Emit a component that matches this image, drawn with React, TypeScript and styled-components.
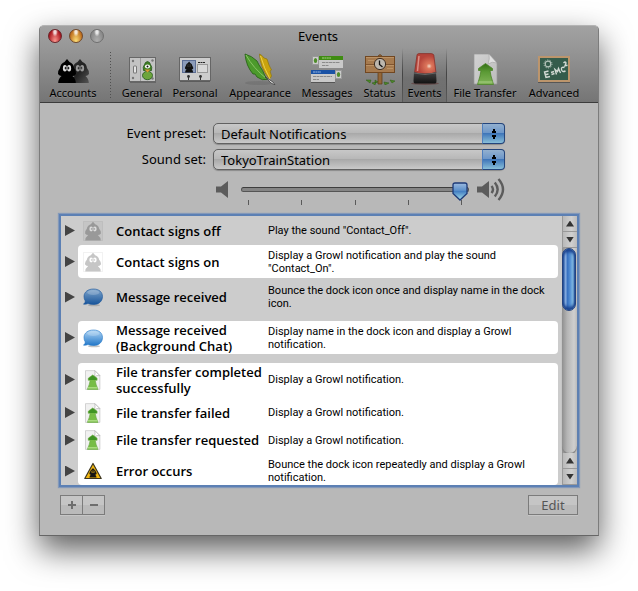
import React, { useState } from "react";
import styled, { createGlobalStyle, css } from "styled-components";

const GlobalStyle = createGlobalStyle`
  * { box-sizing: border-box; }
  body {
    margin: 0;
    background: #fff;
    color: #000;
    font-family: "Noto Sans", "Open Sans", sans-serif;
    font-size: 13px;
    overflow: hidden;
  }
  button, select { font: inherit; color: inherit; }
`;

const Window = styled.main`
  margin: 25px 39px 54px;
  border: 1px solid #7c7c7c;
  border-top-color: #b4b4b4;
  border-bottom-color: #666;
  border-radius: 5px 5px 0 0;
  background: #b8b8b8;
  box-shadow: 0 14px 32px rgba(0, 0, 0, 0.64);
`;

const Header = styled.header`
  border-bottom: 1px solid #3c3c3c;
  border-radius: 4px 4px 0 0;
  background: linear-gradient(#a2a2a2, #949494 35%, #757575);
`;

const TitleBar = styled.div`
  display: grid;
  grid-template-columns: 1fr auto 1fr;
  align-items: center;
  height: 20px;
  padding: 0 10px 0 8px;
`;

const Lights = styled.div`
  display: flex;
  gap: 7px;
`;

const Light = styled.button<{ $base: string; $glow: string; $edge: string }>`
  width: 14px;
  height: 14px;
  padding: 0;
  border: 1px solid ${(p) => p.$edge};
  border-radius: 50%;
  background:
    radial-gradient(ellipse at 50% 15%, rgba(255, 255, 255, 0.8) 0 12%, transparent 34%),
    radial-gradient(ellipse at 50% 95%, ${(p) => p.$glow}, ${(p) => p.$base} 80%);
`;

const Title = styled.h1`
  margin: 0;
  font-size: 13px;
  font-weight: 400;
`;

const Toolbar = styled.nav`
  display: flex;
  height: 56px;
  padding-left: 3px;
`;

const Tool = styled.button<{ $width: number; $selected?: boolean }>`
  display: flex;
  flex: none;
  flex-direction: column;
  align-items: center;
  width: ${(p) => p.$width}px;
  padding: 7px 0 0;
  border: 0;
  background: none;
  font-size: 11px;
  line-height: 16px;
  white-space: nowrap;
  text-shadow: 0 1px 0 rgba(255, 255, 255, 0.15);
  ${(p) =>
    p.$selected &&
    css`
      border: solid transparent;
      border-width: 0 1px;
      border-image: linear-gradient(transparent 5%, #444 50%, #5c5c5c) 1;
      background: linear-gradient(transparent 5%, rgba(0, 0, 0, 0.14) 60%, rgba(0, 0, 0, 0.06));
    `}
`;

const ToolIcon = styled.svg`
  flex: none;
  width: 34px;
  height: 32px;
`;

const Divider = styled.span`
  width: 14px;
  flex: none;
  margin: 6px 0 4px;
  background: linear-gradient(#505050 1px, transparent 1px) center top / 1px 3px repeat-y;
`;

const Content = styled.div`
  padding: 20px 18px 20px 19px;
`;

const Settings = styled.div`
  display: grid;
  grid-template-columns: 147px 1fr;
  column-gap: 7px;
  row-gap: 5px;
  align-items: center;
  margin-right: 75px;
`;

const Label = styled.label`
  text-align: right;
  line-height: 21px;
`;

const Popup = styled.div`
  position: relative;
  height: 21px;
  &::after {
    content: "";
    position: absolute;
    inset: 0 0 0 auto;
    width: 21px;
    border: 1px solid #24457c;
    border-left-color: #4f7fbe;
    border-radius: 0 4px 4px 0;
    background:
      conic-gradient(from 153deg at 50% 0, #000 54deg, transparent 0) center 4px / 6px 5px no-repeat,
      conic-gradient(from -27deg at 50% 100%, #000 54deg, transparent 0) center 11px / 6px 5px no-repeat,
      linear-gradient(#93b0cf, #6d97c9 45%, #3f76b9 50%, #88bfd9);
    pointer-events: none;
  }
`;

const Select = styled.select`
  width: 100%;
  height: 21px;
  padding: 0 26px 0 7px;
  appearance: none;
  border: 1px solid #616161;
  border-radius: 5px;
  background: linear-gradient(#c8c8c8, #b8b8b8 45%, #a9a9a9 50%, #c9c9c9);
  box-shadow: 0 1px 1px rgba(0, 0, 0, 0.25);
  outline: 0;
`;

const Volume = styled.div`
  display: grid;
  grid-template-columns: 20px 1fr 30px;
  column-gap: 6px;
  grid-column: 2;
  align-items: start;
  height: 37px;
  margin-left: 2px;
  padding-top: 2px;
`;

const Range = styled.input`
  display: block;
  width: 100%;
  height: 20px;
  margin: 2px 0 0;
  appearance: none;
  background: none;
  &::-webkit-slider-runnable-track {
    height: 5px;
    border: 1px solid #555;
    border-top-color: #3e3e3e;
    border-radius: 3px;
    background: #858585;
  }
  &::-webkit-slider-thumb {
    appearance: none;
    width: 16px;
    height: 19px;
    margin-top: -6px;
    background: url("data:image/svg+xml,%3Csvg xmlns='http://www.w3.org/2000/svg' viewBox='0 0 16 19'%3E%3Cdefs%3E%3ClinearGradient id='g' x2='0' y2='1'%3E%3Cstop stop-color='%239dbbe0'/%3E%3Cstop offset='.42' stop-color='%235f92cb'/%3E%3Cstop offset='.5' stop-color='%234580c3'/%3E%3Cstop offset='1' stop-color='%23a5e0ea'/%3E%3C/linearGradient%3E%3C/defs%3E%3Cpath d='M3 1h10q2 0 2 2v8.500l-7 6.500l-7-6.500V3q0-2 2-2z' fill='url(%23g)' stroke='%231d3a78' stroke-width='1.300'/%3E%3C/svg%3E");
  }
`;

const Ticks = styled.div`
  display: flex;
  justify-content: space-between;
  margin: 1px 7px 0;
`;

const Tick = styled.i`
  width: 1px;
  height: 5px;
  background: #5a5a5a;
`;

const Speaker = styled.svg`
  width: 100%;
  height: 26px;
`;

const ListFrame = styled.div`
  display: grid;
  grid-template-columns: 1fr 15px;
  margin: 4px 3px 0 2px;
  background: #ccc;
  box-shadow: 0 0 0 2px #5c80b4, 0 0 1px 3px #8398b9;
`;

const Events = styled.table`
  display: block;
  font-size: 11px;
  line-height: 13px;
`;

const Group = styled.tbody<{ $light?: boolean; $after?: number }>`
  display: block;
  margin: 0 4px ${(p) => p.$after ?? 0}px 0;
  ${(p) =>
    p.$light &&
    css`
      td:not(:first-child) { background: #fff; }
      tr:first-child td:nth-child(2) { border-top-left-radius: 4px; }
      tr:last-child td:nth-child(2) { border-bottom-left-radius: 4px; }
      tr:first-child td:last-child { border-top-right-radius: 4px; }
      tr:last-child td:last-child { border-bottom-right-radius: 4px; }
    `}
`;

const EventRow = styled.tr<{ $height: number; $pad?: number }>`
  display: grid;
  grid-template-columns: 17px 36px 152px 1fr;
  min-height: ${(p) => p.$height}px;
  & > td { padding-top: ${(p) => p.$pad ?? 0}px; }
`;

const Cell = styled.td`
  display: flex;
  align-items: center;
  padding: 0;
`;

const IconCell = styled(Cell)`
  svg { width: 20px; height: 20px; margin-left: 5px; }
`;

const NameCell = styled(Cell)`
  padding-left: 2px;
  font-family: "Open Sans", "Noto Sans", sans-serif;
  font-size: 13px;
  font-weight: 600;
  line-height: 16px;
`;

const TextCell = styled(Cell)`
  padding: 0 6px 0 2px;
  font-family: Roboto, "Noto Sans", sans-serif;
`;

const Disclosure = styled.button`
  width: 10px;
  height: 11px;
  margin-left: 4px;
  padding: 0;
  border: 0;
  background: #444;
  clip-path: polygon(0 0, 100% 50%, 0 100%);
`;

const Scrollbar = styled.div`
  display: flex;
  flex-direction: column;
  background: linear-gradient(90deg, #8f8f8f, #b5b5b5 35%, #cfcfcf 80%, #bbb);
`;

const ScrollButton = styled.button<{ $down?: boolean }>`
  height: 16px;
  padding: 0;
  border: 0;
  border-left: 1px solid #999;
  border-bottom: 1px solid #999;
  background: linear-gradient(90deg, #b9b9b9, #d0d0d0 60%, #bcbcbc);
  &::before {
    content: "";
    display: block;
    width: 8px;
    height: 6px;
    margin: 0 auto;
    background: #333;
    clip-path: ${(p) => (p.$down ? "polygon(0 0, 100% 0, 50% 100%)" : "polygon(50% 0, 100% 100%, 0 100%)")};
  }
`;

const Thumb = styled.div`
  flex: none;
  height: 63px;
  margin: 0 1px 0 0;
  border: 1px solid #24437f;
  border-radius: 7px;
  background: linear-gradient(90deg, #3565ae, #8fb5e4 20%, #3771c2 38%, #5c98d8 65%, #8cc4e6 85%, #2c5a9f);
  box-shadow: inset 0 3px 3px #1b438f, inset 0 -3px 3px #1b438f;
`;

const Spacer = styled.div`
  flex: 1;
  border-radius: 0 0 8px 8px;
  box-shadow: 0 2px 1px #888;
`;

const Footer = styled.footer`
  display: flex;
  align-items: flex-end;
  justify-content: space-between;
  margin: 10px 2px 0 1px;
`;

const Segments = styled.div`
  display: flex;
`;

const SmallButton = styled.button<{ $width: number }>`
  display: flex;
  align-items: center;
  justify-content: center;
  width: ${(p) => p.$width}px;
  height: 20px;
  padding: 0;
  border: 1px solid #7b7b7b;
  background: linear-gradient(#c5c5c5 50%, #bababa 50%);
  color: #555;
  box-shadow: 0 1px 0 #c6c6c6;
  & + & { margin-left: -1px; }
  svg { width: 10px; height: 10px; }
`;

/* A hooded two-eyed figure, drawn in a 20 × 24 area. */
const Figure = ({ fill, eye = "#fff" }: { fill: string; eye?: string }) => (
  <g>
    <path
      d="M10 0 12.500 3Q16.500 4.500 17 9Q19.500 12 19 15Q17.500 17 15.500 17Q18.800 20 18.800 24H1.200Q1.200 20 4.500 17Q2.500 17 1 15Q.5 12 3 9Q3.500 4.500 7.500 3Z"
      fill={fill}
    />
    <ellipse cx="7.900" cy="9.200" rx="2" ry="3.200" fill={eye} />
    <ellipse cx="12.100" cy="9.200" rx="2" ry="3.200" fill={eye} />
    <path d="M8.700 7.800v2.600M11.300 7.800v2.600M7.600 9.100h2M10.400 9.100h2" stroke={fill} strokeWidth=".9" />
  </g>
);

const AccountsIcon = () => (
  <ToolIcon viewBox="0 0 34 32">
    <defs>
      <linearGradient id="shade" x1="0" y1="0" x2="1" y2="1">
        <stop stopColor="#333" />
        <stop offset=".5" stopColor="#222" />
        <stop offset="1" stopColor="#555" />
      </linearGradient>
    </defs>
    <g transform="translate(14 6)"><Figure fill="url(#shade)" eye="#999" /></g>
    <g transform="translate(1 6)"><Figure fill="#000" eye="#ddd" /></g>
  </ToolIcon>
);

const GeneralIcon = () => (
  <ToolIcon viewBox="0 0 34 32">
    <rect x="4.500" y="4.500" width="26" height="24" fill="#c3c3c3" stroke="#676767" />
    <path d="M5 29.500H31" stroke="#555" opacity=".6" />
    <path d="M15.500 5V28" stroke="#999" />
    <g fill="#777"><circle cx="8" cy="8" r="1.200" /><circle cx="8" cy="25" r="1.200" /><circle cx="27.500" cy="7.500" r="1.200" /><circle cx="27.500" cy="25.500" r="1.200" /></g>
    <rect x="8" y="12.500" width="4" height="8" rx="1.500" fill="#777" />
    <rect x="9" y="13.500" width="2" height="6" fill="#e4e4e4" />
    <path d="M22.500 8.500Q25 9 25.500 11.500Q27.500 14 26.500 17.500H18.500Q17.500 14 19.500 11.500Q20 9 22.500 8.500Z" fill="#3f7d22" stroke="#23551a" strokeWidth=".8" />
    <ellipse cx="22.500" cy="22.500" rx="5" ry="4.200" fill="#6da53c" stroke="#23551a" strokeWidth=".8" />
    <ellipse cx="22.500" cy="13.500" rx="2.600" ry="2" fill="#fff" />
    <circle cx="22.500" cy="13.500" r="1" fill="#111" />
    <path d="M19.500 16.500H25.500L22.500 19.500Z" fill="#d79a31" />
  </ToolIcon>
);

const PersonalIcon = () => (
  <ToolIcon viewBox="0 0 34 32">
    <rect x="1.500" y="4.500" width="31" height="23" fill="#cdcdcd" stroke="#666" />
    <path d="M2 28.500H32" stroke="#444" opacity=".6" />
    <rect x="4.500" y="7.500" width="13" height="12" fill="#8c9cba" stroke="#5c6e95" />
    <g transform="translate(6.500 8.500) scale(.46)"><Figure fill="#111" eye="#333" /></g>
    <path d="M20 9.500H27" stroke="#222" strokeDasharray="2 .5" />
    <rect x="19.500" y="11.500" width="10" height="8" fill="#d8d8d8" stroke="#999" />
    <g fill="#333"><circle cx="10.500" cy="23.500" r="1.400" /><circle cx="22.500" cy="23.500" r="1.400" /><path d="M10 24h1v3h-1zM22 24h1v3h-1z" /></g>
  </ToolIcon>
);

const AppearanceIcon = () => (
  <ToolIcon viewBox="0 0 34 32">
    <ellipse cx="16" cy="30" rx="14" ry="2" fill="#555" opacity=".25" />
    <path d="M16.500 1Q19 2 21 5L24 6 26 12 28.500 17 27 18 28.500 23Q27 27 25.500 25Q17 14 16.500 1Z" fill="#c9a30e" stroke="#8d750e" strokeWidth=".7" />
    <path d="M17.500 3Q21 15 27 26" stroke="#ecd04e" fill="none" />
    <path d="M2 1Q9 3 14 8L16 12Q20 17 22 23L25 26.500Q19 28 14 24L12 21 10 21Q3 13 2 1Z" fill="#4c9a2c" stroke="#236111" strokeWidth=".8" />
    <path d="M3 2Q10 15 24 26" stroke="#8ac466" fill="none" />
    <path d="M22 24 30 29 32 32 28 30Z" fill="#ddd" stroke="#333" strokeWidth=".7" />
  </ToolIcon>
);

const MessagesIcon = () => (
  <ToolIcon viewBox="0 0 34 32">
    <rect x="9" y="4" width="24" height="11" fill="#c9c9c9" />
    <rect x="9" y="3" width="24" height="4" fill="#3f8c12" />
    <path d="M12 5H21" stroke="#a6d185" strokeDasharray="2 .4" />
    <path d="M12 9.500H30M12 12.500H19" stroke="#8a8a8a" strokeDasharray="3 .5" />
    <rect x="2.500" y="3.500" width="6" height="8" fill="#ccc" stroke="#999" />
    <ellipse cx="5.500" cy="7.500" rx="1.700" ry="2.500" fill="#4f8c2a" />
    <rect x="1" y="18" width="24" height="11" fill="#c9c9c9" />
    <rect x="1" y="17" width="24" height="4" fill="#1a52a5" />
    <path d="M3 19H11" stroke="#9bbae4" strokeDasharray="2 .4" />
    <path d="M3 23.500H22M3 26.500H9" stroke="#8a8a8a" strokeDasharray="3 .5" />
    <path d="M1 29.500H25" stroke="#555" />
    <rect x="25.500" y="17.500" width="6" height="8" fill="#ccc" stroke="#999" />
    <ellipse cx="28.500" cy="21.500" rx="1.700" ry="2.500" fill="#4f8c2a" />
  </ToolIcon>
);

const StatusIcon = () => (
  <ToolIcon viewBox="0 0 34 32">
    <path d="M3 27l5 0-1 3zM9 30l4-1-1 3zM21 29l5 1-4 2zM27 27l5 1-3 2zM12 27l3 2-3 1z" fill="#4c8726" stroke="#2c5d17" strokeWidth=".5" />
    <path d="M15 3Q17 0 19 3V31H15Z" fill="#946738" stroke="#593716" strokeWidth=".7" />
    <rect x="2.500" y="3.500" width="29" height="16" fill="#a67a4e" stroke="#714721" />
    <path d="M3 11.500H31" stroke="#805530" />
    <path d="M3 4.500H31M3 12.500H31M5 7.500h6M24 15.500h6" stroke="#bb9265" />
    <circle cx="17" cy="11" r="5.600" fill="#bdb7ae" stroke="#403025" />
    <path d="M16.500 7.500V11.500L19.500 14" stroke="#111" strokeWidth="1.300" fill="none" />
  </ToolIcon>
);

const SirenIcon = () => (
  <ToolIcon viewBox="0 0 34 32">
    <defs>
      <radialGradient id="lamp" cx=".68" cy=".6">
        <stop stopColor="#f3d9c6" />
        <stop offset=".25" stopColor="#dc765b" />
        <stop offset="1" stopColor="#b5443a" />
      </radialGradient>
      <linearGradient id="base" x1="0" y1="0" x2="0" y2="1">
        <stop stopColor="#444" />
        <stop offset="1" stopColor="#111" />
      </linearGradient>
    </defs>
    <ellipse cx="17" cy="30.500" rx="14" ry="1.500" fill="#5c2623" opacity=".45" />
    <path d="M9 2Q9 .8 11 .6H23Q25.500.8 25.800 2L28 20Q17 23 6.500 20Z" fill="url(#lamp)" stroke="#832a24" strokeWidth=".7" />
    <path d="M11 3 9.500 18" stroke="#da8f85" strokeWidth="1.500" />
    <path d="M6 19Q17 22 28 19L28.500 28Q28.500 30.500 27 30.500H7Q5.500 30.500 5.500 28Z" fill="url(#base)" />
    <path d="M6 20Q17 23 28 20" stroke="#666" fill="none" />
  </ToolIcon>
);

const TransferIcon = () => (
  <ToolIcon viewBox="0 0 34 32">
    <defs>
      <linearGradient id="paper" x1="0" y1="0" x2="1" y2="1">
        <stop stopColor="#d2d2d2" />
        <stop offset="1" stopColor="#bcbcbc" />
      </linearGradient>
      <linearGradient id="leaf" x1="0" y1="0" x2="0" y2="1">
        <stop stopColor="#336f14" />
        <stop offset=".4" stopColor="#5b9a35" />
        <stop offset="1" stopColor="#82b559" />
      </linearGradient>
    </defs>
    <path d="M6 1H21L29 10V31H6Z" fill="url(#paper)" stroke="#999" strokeWidth=".7" />
    <path d="M21 1 29 10Q24 8 20 11Q22 6 21 1Z" fill="#e0e0e0" stroke="#999" strokeWidth=".5" />
    <path d="M17.500 10.500 24.500 15.500V17.500H22L23 23 25.500 31.500H9.500L12 23 13 17.500H10.500V15.500Z" fill="url(#leaf)" stroke="#4d8428" strokeWidth=".8" />
    <path d="M10.500 29H24.500" stroke="#a9ce85" />
  </ToolIcon>
);

const AdvancedIcon = () => (
  <ToolIcon viewBox="0 0 34 32">
    <rect x="2" y="4" width="30" height="24" fill="#345c4b" stroke="#bc956c" strokeWidth="2" />
    <path d="M1 29.500H33" stroke="#444" opacity=".7" />
    <circle cx="11" cy="11" r="2.800" stroke="#b4c4ba" strokeWidth="1.200" fill="none" />
    <circle cx="11" cy="11" r="4" stroke="#b4c4ba" strokeDasharray="1.200 1.300" fill="none" />
    <path d="M11.500 18 7.500 19 9 24.500 13 23.500M8 21.800 11.500 21M14 19.500l3-1M14.500 21.500l3-1M19.500 21.500 18 16.500 20.500 18.500 21.500 15.500 23.500 20M27.500 14.500q-3.500-1-3 2t4 1.500M26.500 10q2-2 2.500 0l-1 2.800 2.500-.6" stroke="#d3dbd5" strokeWidth="1.400" fill="none" />
  </ToolIcon>
);

const ContactArt = ({ fill, page, eye }: { fill: string; page: string; eye: string }) => (
  <svg viewBox="0 0 20 20">
    <rect x=".5" y=".5" width="19" height="19" fill={page} stroke={fill} strokeOpacity=".45" strokeDasharray="1 1" />
    <g transform="translate(1.200 .8) scale(.88 .78)"><Figure fill={fill} eye={eye} /></g>
  </svg>
);

const BubbleArt = ({ id, top, bottom }: { id: string; top: string; bottom: string }) => (
  <svg viewBox="0 0 20 20">
    <defs>
      <linearGradient id={id} x1="0" y1="0" x2="0" y2="1">
        <stop stopColor={top} />
        <stop offset="1" stopColor={bottom} />
      </linearGradient>
    </defs>
    <ellipse cx="11" cy="18.300" rx="6" ry="1" fill="#888" opacity=".5" />
    <path d="M10.500 2C16 2 19.500 5 19.500 9.500S16 17.500 11 17.500Q7 17.500 5 16.500Q3 17.500.5 17.200Q2.500 15.500 2.300 14Q1 12 1 9.500C1 5 5 2 10.500 2Z" fill={`url(#${id})`} stroke={bottom} strokeWidth=".6" />
    <ellipse cx="10.300" cy="5.500" rx="6" ry="2.600" fill="#fff" opacity=".2" />
  </svg>
);

const ErrorArt = () => (
  <svg viewBox="0 0 20 20">
    <path d="M10 2.500 18.200 17.500H1.800Z" fill="#f2b60f" stroke="#3c3520" strokeWidth="1.200" strokeLinejoin="round" />
    <g transform="translate(6 7) scale(.4)"><Figure fill="#151515" eye="#b48a16" /></g>
  </svg>
);

const SmallTransfer = () => (
  <svg viewBox="5 0 26 32">
    <path d="M6 1H21L29 9V31H6Z" fill="#f1f1f1" stroke="#bbb" />
    <path d="M21 1 29 9Q24 8 20 11Q22 6 21 1Z" fill="#fff" stroke="#aaa" />
    <path d="M17.500 8 24.500 13V16.500H21.500L23 23 26 31H9L12 23 13.500 16.500H10.500V13Z" fill="#77bd46" stroke="#6aa843" />
    <path d="M17.500 8.500 24 13V16H11V13Z" fill="#409424" />
    <path d="M10 28.500H25" stroke="#b5e28e" strokeWidth="2" />
  </svg>
);

const tools = [
  { name: "General", width: 50, icon: <GeneralIcon /> },
  { name: "Personal", width: 56, icon: <PersonalIcon /> },
  { name: "Appearance", width: 74, icon: <AppearanceIcon /> },
  { name: "Messages", width: 60, icon: <MessagesIcon /> },
  { name: "Status", width: 45, icon: <StatusIcon /> },
  { name: "Events", width: 45, icon: <SirenIcon /> },
  { name: "File Transfer", width: 76, icon: <TransferIcon /> },
  { name: "Advanced", width: 62, icon: <AdvancedIcon /> },
];

type EventItem = { name: string; text: string; icon: React.ReactNode; height: number; pad?: number };

const groups: { light?: boolean; after?: number; events: EventItem[] }[] = [
  {
    events: [
      { name: "Contact signs off", text: 'Play the sound "Contact_Off".', height: 29, icon: <ContactArt fill="#999" page="#c5c5c5" eye="#ddd" /> },
    ],
  },
  {
    light: true,
    events: [
      { name: "Contact signs on", text: 'Display a Growl notification and play the sound "Contact_On".', height: 33, icon: <ContactArt fill="#c6c6c6" page="#fff" eye="#fff" /> },
    ],
  },
  {
    after: 5,
    events: [
      { name: "Message received", text: "Bounce the dock icon once and display name in the dock icon.", height: 38, icon: <BubbleArt id="bubble" top="#7fa5cb" bottom="#17549a" /> },
    ],
  },
  {
    light: true,
    after: 9,
    events: [
      { name: "Message received (Background Chat)", text: "Display name in the dock icon and display a Growl notification.", height: 33, icon: <BubbleArt id="bubbleLight" top="#b3d7f5" bottom="#2277c8" /> },
    ],
  },
  {
    light: true,
    events: [
      { name: "File transfer completed successfully", text: "Display a Growl notification.", height: 33, icon: <SmallTransfer /> },
      { name: "File transfer failed", text: "Display a Growl notification.", height: 33, icon: <SmallTransfer /> },
      { name: "File transfer requested", text: "Display a Growl notification.", height: 22, icon: <SmallTransfer /> },
      { name: "Error occurs", text: "Bounce the dock icon repeatedly and display a Growl notification.", height: 34, pad: 6, icon: <ErrorArt /> },
    ],
  },
];

export default function App() {
  const [volume, setVolume] = useState(100);
  const [selected, setSelected] = useState("Events");

  return (
    <>
      <GlobalStyle />
      <Window>
        <Header>
          <TitleBar>
            <Lights>
              <Light aria-label="Close" $base="#a30f19" $glow="#ff9a91" $edge="#692429" />
              <Light aria-label="Minimize" $base="#b96617" $glow="#ffe27a" $edge="#70492b" />
              <Light aria-label="Zoom" $base="#878787" $glow="#b0b0b0" $edge="#707070" />
            </Lights>
            <Title>Events</Title>
          </TitleBar>
          <Toolbar>
            <Tool $width={60} $selected={selected === "Accounts"} onClick={() => setSelected("Accounts")}>
              <AccountsIcon />
              Accounts
            </Tool>
            <Divider />
            {tools.map((t) => (
              <Tool key={t.name} $width={t.width} $selected={selected === t.name} onClick={() => setSelected(t.name)}>
                {t.icon}
                {t.name}
              </Tool>
            ))}
          </Toolbar>
        </Header>
        <Content>
          <Settings>
            <Label htmlFor="preset">Event preset:</Label>
            <Popup>
              <Select id="preset">
                <option>Default Notifications</option>
              </Select>
            </Popup>
            <Label htmlFor="soundset">Sound set:</Label>
            <Popup>
              <Select id="soundset">
                <option>TokyoTrainStation</option>
              </Select>
            </Popup>
            <Volume>
              <Speaker viewBox="0 0 20 26">
                <path d="M1 9.500H6L13 4V21L6 15.500H1Z" fill="#5c5c5c" />
              </Speaker>
              <div>
                <Range type="range" aria-label="Volume" min={0} max={100} value={volume} onChange={(e) => setVolume(Number(e.target.value))} />
                <Ticks><Tick /><Tick /><Tick /><Tick /><Tick /></Ticks>
              </div>
              <Speaker viewBox="0 0 30 26">
                <path d="M2 9.500H7L14 4V21L7 15.500H2Z" fill="#5c5c5c" />
                <path d="M16.500 9Q19.500 12.500 16.500 16M19.800 5.500Q25.500 12.500 19.800 19.500M23.500 2Q32.500 12.500 23.500 23" fill="none" stroke="#5c5c5c" strokeWidth="2.400" />
              </Speaker>
            </Volume>
          </Settings>
          <ListFrame>
            <Events aria-label="Events">
              {groups.map((g, i) => (
                <Group key={i} $light={g.light} $after={g.after}>
                  {g.events.map((e) => (
                    <EventRow key={e.name} $height={e.height} $pad={e.pad}>
                      <Cell><Disclosure aria-label={`Show ${e.name}`} /></Cell>
                      <IconCell>{e.icon}</IconCell>
                      <NameCell>{e.name}</NameCell>
                      <TextCell>{e.text}</TextCell>
                    </EventRow>
                  ))}
                </Group>
              ))}
            </Events>
            <Scrollbar>
              <ScrollButton aria-label="Scroll up" />
              <ScrollButton aria-label="Scroll down" $down />
              <Thumb />
              <Spacer />
              <ScrollButton aria-label="Scroll up" />
              <ScrollButton aria-label="Scroll down" $down />
            </Scrollbar>
          </ListFrame>
          <Footer>
            <Segments>
              <SmallButton $width={23} aria-label="Add">
                <svg viewBox="0 0 10 10"><path d="M5 1V9M1 5H9" stroke="#6e6e6e" strokeWidth="2" /></svg>
              </SmallButton>
              <SmallButton $width={23} aria-label="Remove">
                <svg viewBox="0 0 10 10"><path d="M1 5H9" stroke="#6e6e6e" strokeWidth="2" /></svg>
              </SmallButton>
            </Segments>
            <SmallButton $width={50}>Edit</SmallButton>
          </Footer>
        </Content>
      </Window>
    </>
  );
}
